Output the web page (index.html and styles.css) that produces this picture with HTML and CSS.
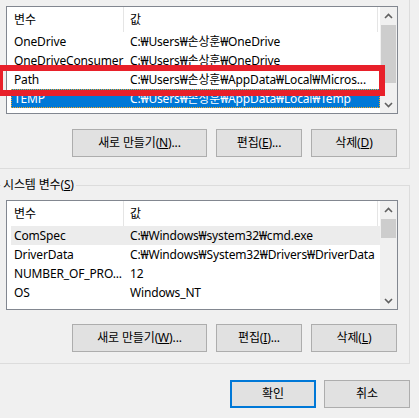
FILE: index.html
```html
<!DOCTYPE html>
<html lang="ko">
<head>
<meta charset="utf-8">
<link rel="stylesheet" href="styles.css">
</head>
<body>
<div class="dialog">
  <section class="group user">
    <div class="listview lv-user">
      <div class="lv-main">
        <div class="lv-header"><span class="c1">변수</span><span class="c2">값</span></div>
        <div class="row"><span class="c1">OneDrive</span><span class="c2">C:₩Users₩손상훈₩OneDrive</span></div>
        <div class="row"><span class="c1">OneDriveConsumer</span><span class="c2">C:₩Users₩손상훈₩OneDrive</span></div>
        <div class="row"><span class="c1">Path</span><span class="c2">C:₩Users₩손상훈₩AppData₩Local₩Micros...</span></div>
        <div class="row selected"><span class="c1">TEMP</span><span class="c2">C:₩Users₩손상훈₩AppData₩Local₩Temp</span></div>
      </div>
      <div class="scrollbar">
        <div class="sb-btn"><svg width="9" height="6" viewBox="0 0 9 6"><path d="M1 5 L4.5 1.5 L8 5" fill="none" stroke="#606060" stroke-width="1.6"/></svg></div>
        <div class="sb-track"><div class="sb-thumb thumb-user"></div></div>
        <div class="sb-btn"><svg width="9" height="6" viewBox="0 0 9 6"><path d="M1 1 L4.5 4.5 L8 1" fill="none" stroke="#606060" stroke-width="1.6"/></svg></div>
      </div>
    </div>
    <div class="btn-row">
      <button class="btn wide">새로 만들기(<u>N</u>)...</button>
      <button class="btn">편집(<u>E</u>)...</button>
      <button class="btn">삭제(<u>D</u>)</button>
    </div>
  </section>

  <fieldset class="group system">
    <legend>시스템 변수(<u>S</u>)</legend>
    <div class="listview lv-system">
      <div class="lv-main">
        <div class="lv-header"><span class="c1">변수</span><span class="c2">값</span></div>
        <div class="row hover"><span class="c1">ComSpec</span><span class="c2">C:₩Windows₩system32₩cmd.exe</span></div>
        <div class="row"><span class="c1">DriverData</span><span class="c2">C:₩Windows₩System32₩Drivers₩DriverData</span></div>
        <div class="row"><span class="c1">NUMBER_OF_PRO...</span><span class="c2">12</span></div>
        <div class="row"><span class="c1">OS</span><span class="c2">Windows_NT</span></div>
      </div>
      <div class="scrollbar">
        <div class="sb-btn"><svg width="9" height="6" viewBox="0 0 9 6"><path d="M1 5 L4.5 1.5 L8 5" fill="none" stroke="#606060" stroke-width="1.6"/></svg></div>
        <div class="sb-track"><div class="sb-thumb thumb-system"></div></div>
        <div class="sb-btn"><svg width="9" height="6" viewBox="0 0 9 6"><path d="M1 1 L4.5 4.5 L8 1" fill="none" stroke="#606060" stroke-width="1.6"/></svg></div>
      </div>
    </div>
    <div class="btn-row">
      <button class="btn wide">새로 만들기(<u>W</u>)...</button>
      <button class="btn">편집(<u>I</u>)...</button>
      <button class="btn">삭제(<u>L</u>)</button>
    </div>
  </fieldset>

  <div class="dialog-buttons">
    <button class="btn default">확인</button>
    <button class="btn">취소</button>
  </div>
</div>
<div class="highlight"></div>
</body>
</html>
```

FILE: styles.css
```css
html, body {
  margin: 0;
  padding: 0;
}
body {
  width: 419px;
  height: 418px;
  overflow: hidden;
  background: #f0f0f0;
  font-family: "Noto Sans", "Noto Sans CJK KR", sans-serif;
  font-size: 12px;
  letter-spacing: -0.15px;
  color: #000;
  position: relative;
}
.dialog {
  margin-left: -6px;
  width: 416px;
  display: flex;
  flex-direction: column;
}
.group {
  box-sizing: border-box;
  width: 416px;
  margin: 0;
  border: 1px solid #dcdcdc;
  padding: 0 11px 11px;
}
.user {
  border-top: none;
  padding-top: 6px;
}
.system {
  margin-top: 8px;
  padding-top: 7px;
  min-width: 0;
}
.system legend {
  padding: 0 2px;
  margin-left: -5px;
  line-height: 16px;
}
u {
  text-decoration: underline;
  text-underline-offset: 1px;
}
.listview {
  box-sizing: border-box;
  width: 392px;
  border: 1px solid #828790;
  background: #fff;
  display: flex;
  overflow: hidden;
}
.lv-user { height: 108px; }
.lv-system { height: 110px; }
.lv-main {
  flex: 1;
  min-width: 0;
  overflow: hidden;
}
.lv-header {
  display: flex;
  height: 25px;
  align-items: center;
  border-right: 1px solid #e5e5e5;
  margin-right: 2px;
}
.lv-header .c1 {
  box-sizing: border-box;
  width: 117px;
  padding-left: 7px;
  height: 25px;
  line-height: 26px;
  border-right: 1px solid #e5e5e5;
}
.lv-header .c2 {
  padding-left: 6px;
  line-height: 26px;
}
.row {
  display: flex;
  height: 19px;
  line-height: 19px;
  margin-left: 4px;
  white-space: nowrap;
}
.row .c1 {
  box-sizing: border-box;
  width: 119px;
  padding-left: 3px;
  flex: none;
}
.row .c2 {
  flex: none;
}
.row.selected {
  background: #0078d7;
  color: #fff;
  outline: 1px dotted #f5a623;
  outline-offset: -1px;
}
.row.hover {
  background: #ececec;
}
.scrollbar {
  width: 17px;
  flex: none;
  background: #f0f0f0;
  display: flex;
  flex-direction: column;
}
.sb-btn {
  height: 17px;
  flex: none;
  display: flex;
  align-items: center;
  justify-content: center;
}
.sb-track {
  flex: 1;
  display: flex;
  flex-direction: column;
}
.sb-thumb {
  background: #cdcdcd;
  margin: 0 1px;
}
.thumb-user { height: 58px; margin-top: 1px; }
.thumb-system { height: 19px; margin-top: 1px; }
.btn-row {
  display: flex;
  justify-content: flex-end;
  gap: 9px;
  margin-top: 15px;
  padding-right: 1px;
}
.system .btn-row { margin-top: 14px; }
.btn {
  box-sizing: border-box;
  width: 86px;
  height: 28px;
  background: #e1e1e1;
  border: 1px solid #adadad;
  font-family: "Noto Sans", "Noto Sans CJK KR", sans-serif;
  font-size: 12px;
  letter-spacing: -0.15px;
  color: #000;
  padding: 0;
  margin: 0;
  line-height: 16px;
}
.btn.wide { width: 135px; }
.btn.default {
  border: 2px solid #0078d7;
}
.dialog-buttons {
  display: flex;
  justify-content: flex-end;
  gap: 8px;
  margin-top: 16px;
}
.highlight {
  position: absolute;
  left: -3px;
  top: 65px;
  width: 388px;
  height: 31px;
  box-sizing: border-box;
  border: 6px solid #e8202a;
}
```
